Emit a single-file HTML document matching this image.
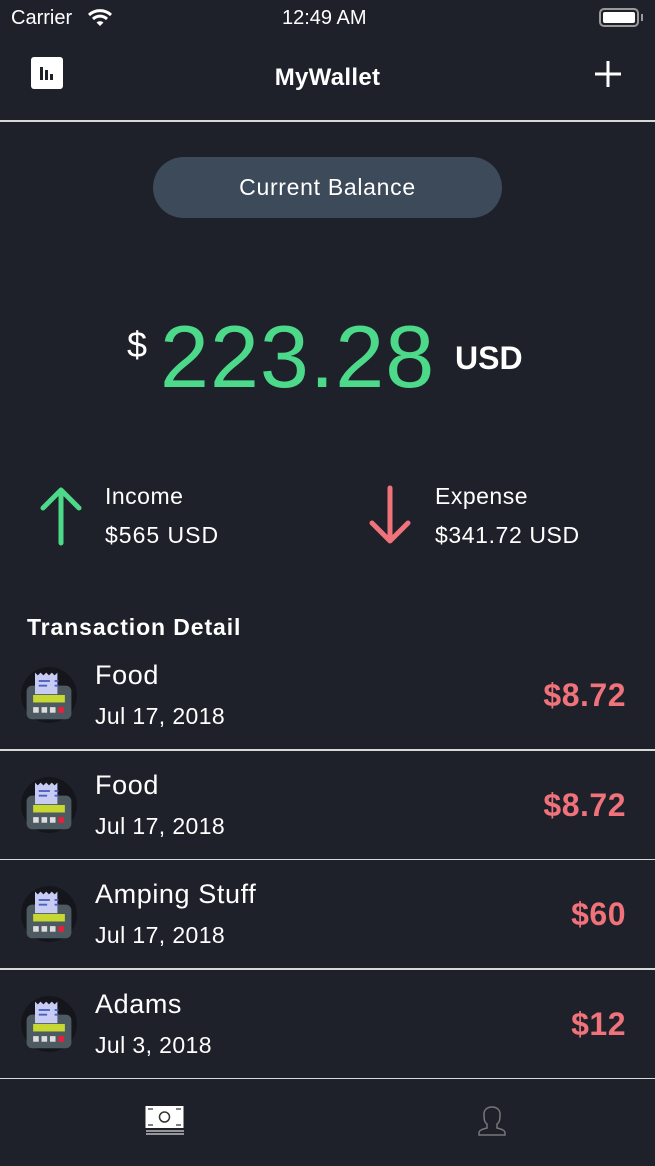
<!DOCTYPE html><html><head><meta charset="utf-8"><style>
*{margin:0;padding:0;box-sizing:border-box}
body{width:655px;height:1166px;background:#1f212a;color:#fff;font-family:"Liberation Sans",sans-serif;position:relative;overflow:hidden}
.a{position:absolute;white-space:nowrap}
.sep{position:absolute;left:0;width:655px;height:2px;background:#d8d8d8}
.amt{position:absolute;right:29px;font-size:32px;font-weight:bold;color:#f0727a;letter-spacing:0.5px}
</style></head><body>
<div class="a" style="left:11px;top:7px;font-size:20px">Carrier</div>
<svg class="a" style="left:87px;top:8px" width="26" height="20" viewBox="0 0 26 20"><path d="M2 7a16 16 0 0 1 22 0" stroke="#fff" stroke-width="3" fill="none"/><path d="M6 11a10 10 0 0 1 14 0" stroke="#fff" stroke-width="3" fill="none"/><path d="M9.5 14.5a5 5 0 0 1 7 0L13 18z" fill="#fff"/></svg>
<div class="a" style="left:282px;top:7px;font-size:20px">12:49 AM</div>
<div class="a" style="left:599px;top:8px;width:40px;height:19px;border:2px solid #999;border-radius:5px;padding:2px"><div style="width:100%;height:100%;background:#fff;border-radius:2px"></div></div>
<div class="a" style="left:641px;top:14px;width:2px;height:7px;background:#999"></div>
<svg class="a" style="left:31px;top:57px" width="32" height="32"><rect width="32" height="32" rx="3" fill="#fff"/><rect x="9" y="10" width="3" height="13" fill="#1f212a"/><rect x="14" y="13" width="3" height="10" fill="#1f212a"/><rect x="19" y="17" width="3" height="6" fill="#1f212a"/></svg>
<div class="a" style="left:0;width:655px;text-align:center;top:64px;font-size:24px;font-weight:bold;letter-spacing:0.3px">MyWallet</div>
<svg class="a" style="left:595px;top:61px" width="26" height="26"><path d="M13 0v26M0 13h26" stroke="#fff" stroke-width="3"/></svg>
<div class="sep" style="top:120px;height:2px"></div>
<div class="a" style="left:153px;top:157px;width:349px;height:61px;border-radius:31px;background:#3c4a5a;text-align:center;line-height:61px;font-size:23px;letter-spacing:0.7px">Current Balance</div>
<div class="a" style="left:127px;top:324px;font-size:36px">$</div>
<div class="a" style="left:160px;top:306px;font-size:88px;color:#4cd98a;letter-spacing:1px">223.28</div>
<div class="a" style="left:455px;top:340px;font-size:32px;font-weight:bold">USD</div>
<svg class="a" style="left:38px;top:485px" width="46" height="62"><path d="M23 58V5M5 23L23 5l18 18" stroke="#4cd98a" stroke-width="5" fill="none" stroke-linecap="round" stroke-linejoin="round"/></svg>
<div class="a" style="left:105px;top:483px;font-size:23px;letter-spacing:0.5px">Income</div>
<div class="a" style="left:105px;top:522px;font-size:23px;letter-spacing:1px">$565 USD</div>
<svg class="a" style="left:367px;top:485px" width="46" height="62"><path d="M23 3v53M5 38l18 18 18-18" stroke="#f0727a" stroke-width="5" fill="none" stroke-linecap="round" stroke-linejoin="round"/></svg>
<div class="a" style="left:435px;top:483px;font-size:23px;letter-spacing:0.5px">Expense</div>
<div class="a" style="left:435px;top:522px;font-size:23px;letter-spacing:0.6px">$341.72 USD</div>
<div class="a" style="left:27px;top:614px;font-size:23px;font-weight:bold;letter-spacing:0.9px">Transaction Detail</div>
<div id="rows"></div>
<script>
var d=[["Food","Jul 17, 2018","$8.72"],["Food","Jul 17, 2018","$8.72"],["Amping Stuff","Jul 17, 2018","$60"],["Adams","Jul 3, 2018","$12"]];
var h="";d.forEach(function(r,i){var y=640+i*109.5;
h+='<svg class="a" style="left:21px;top:'+(y+27)+'px" width="56" height="56" viewBox="0 0 60 60"><circle cx="30" cy="30" r="30" fill="#15161c"/><rect x="6" y="20" width="48" height="36" rx="6" fill="#4e5a62"/><path d="M15 6l3 3 3-3 3 3 3-3 3 3 3-3 3 3 3-3v23H15z" fill="#c9ccf2"/><rect x="19" y="14" width="12" height="2" fill="#4b5fc0"/><rect x="36" y="14" width="4" height="2" fill="#4b5fc0"/><rect x="19" y="19" width="9" height="2" fill="#4b5fc0"/><rect x="36" y="19" width="4" height="2" fill="#4b5fc0"/><rect x="13" y="30" width="34" height="8" fill="#c8d832"/><rect x="13" y="43" width="6" height="6" fill="#ddd"/><rect x="22" y="43" width="6" height="6" fill="#ddd"/><rect x="31" y="43" width="6" height="6" fill="#ddd"/><rect x="40" y="43" width="6" height="6" fill="#e8203a"/></svg>';
h+='<div class="a" style="left:95px;top:'+(y+20)+'px;font-size:27px;letter-spacing:0.6px">'+r[0]+'</div>';
h+='<div class="a" style="left:95px;top:'+(y+63)+'px;font-size:23px;letter-spacing:0.4px">'+r[1]+'</div>';
h+='<div class="amt" style="top:'+(y+37)+'px">'+r[2]+'</div>';
h+='<div class="sep" style="top:'+(y+109)+'px;height:1.5px"></div>';});
document.getElementById("rows").innerHTML=h;
</script>
<svg class="a" style="left:145px;top:1106px" width="40" height="30"><rect x="0.5" y="0" width="38" height="22" fill="#fff"/><circle cx="19.5" cy="11" r="5" fill="none" stroke="#333" stroke-width="1.5"/><path d="M3 3h5M31 3h5M3 19h5M31 19h5" stroke="#333" stroke-width="1.2"/><path d="M1 25h38M1 28h38" stroke="#ddd" stroke-width="1.3"/></svg>
<svg class="a" style="left:477px;top:1106px" width="30" height="30"><path d="M2 29v-2c0-3 4-4 8-5v-4c-3-2-3-6-3-10 0-4 3-7 8-7s8 3 8 7c0 4 0 8-3 10v4c4 1 8 2 8 5v2z" fill="none" stroke="#777" stroke-width="1.5"/></svg>
</body></html>
